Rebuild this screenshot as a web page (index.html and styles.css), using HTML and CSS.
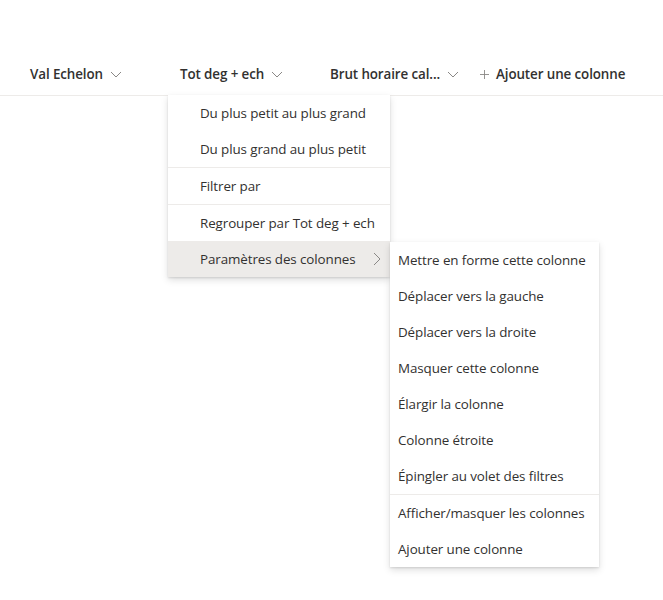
FILE: index.html
```html
<!DOCTYPE html>
<html lang="fr">
<head>
<meta charset="utf-8">
<title>Liste</title>
<link rel="stylesheet" href="styles.css">
</head>
<body>
<div class="page">
  <div class="header">
    <div class="col">
      <span class="col-name">Val Echelon</span>
      <svg class="chev" viewBox="0 0 12 12"><path d="M1 4l5 5 5-5"/></svg>
    </div>
    <div class="col">
      <span class="col-name">Tot deg + ech</span>
      <svg class="chev" viewBox="0 0 12 12"><path d="M1 4l5 5 5-5"/></svg>
    </div>
    <div class="col">
      <span class="col-name">Brut horaire cal...</span>
      <svg class="chev" viewBox="0 0 12 12"><path d="M1 4l5 5 5-5"/></svg>
    </div>
    <div class="add-col">
      <svg class="plus" viewBox="0 0 10 10"><path d="M5 0v10M0 5h10"/></svg>
      <span class="col-name">Ajouter une colonne</span>
    </div>
  </div>

  <div class="menu main-menu">
    <div class="item">Du plus petit au plus grand</div>
    <div class="item">Du plus grand au plus petit</div>
    <div class="divider"></div>
    <div class="item">Filtrer par</div>
    <div class="divider"></div>
    <div class="item">Regrouper par Tot deg + ech</div>
    <div class="item active">
      <span>Paramètres des colonnes</span>
      <svg class="sub-chev" viewBox="0 0 8 14"><path d="M1 1l6 6-6 6"/></svg>
    </div>
  </div>

  <div class="menu sub-menu">
    <div class="item">Mettre en forme cette colonne</div>
    <div class="item">Déplacer vers la gauche</div>
    <div class="item">Déplacer vers la droite</div>
    <div class="item">Masquer cette colonne</div>
    <div class="item">Élargir la colonne</div>
    <div class="item">Colonne étroite</div>
    <div class="item">Épingler au volet des filtres</div>
    <div class="divider"></div>
    <div class="item">Afficher/masquer les colonnes</div>
    <div class="item">Ajouter une colonne</div>
  </div>
</div>
</body>
</html>
```

FILE: styles.css
```css
* { box-sizing: border-box; }

html, body {
  margin: 0;
  padding: 0;
  background: #ffffff;
}

body {
  font-family: "Segoe UI", "Open Sans", "Noto Sans", sans-serif;
  font-size: 14px;
  color: #323130;
}

.page {
  position: relative;
  width: 663px;
  height: 600px;
  padding-top: 53px;
}

/* column header row */
.header {
  display: flex;
  align-items: center;
  height: 43px;
  padding-left: 18px;
  border-bottom: 1px solid #edebe9;
}

.col {
  display: flex;
  align-items: center;
  gap: 7px;
  flex: 0 0 150px;
  min-width: 0;
  padding: 0 12px;
}

.col-name {
  font-size: 13.4px;
  font-weight: 600;
  white-space: nowrap;
  letter-spacing: -0.1px;
}

.chev {
  flex: 0 0 12px;
  width: 12px;
  height: 12px;
  fill: none;
  stroke: #8a8886;
  stroke-width: 1;
}

.add-col {
  display: flex;
  align-items: center;
  gap: 7px;
  padding-left: 12px;
}

.plus {
  flex: 0 0 9px;
  width: 9px;
  height: 9px;
  fill: none;
  stroke: #8a8886;
  stroke-width: 1;
}

/* context menus */
.menu {
  position: absolute;
  background: #ffffff;
  box-shadow: 0 3.2px 7.2px rgba(0, 0, 0, 0.132), 0 0.6px 1.8px rgba(0, 0, 0, 0.108);
}

.main-menu {
  left: 168px;
  top: 95px;
  width: 222px;
}

.sub-menu {
  left: 390px;
  top: 242px;
  width: 209px;
}

.item {
  display: flex;
  align-items: center;
  justify-content: space-between;
  height: 36px;
  font-size: 13.4px;
  letter-spacing: -0.1px;
  white-space: nowrap;
}

.main-menu .item {
  padding: 0 9px 0 32px;
}

.sub-menu .item {
  padding: 0 8px;
}

.item.active {
  background: #edebe9;
}

.sub-chev {
  flex: 0 0 8px;
  width: 8px;
  height: 14px;
  fill: none;
  stroke: #8a8886;
  stroke-width: 1;
}

.divider {
  height: 1px;
  background: #edebe9;
}
```
